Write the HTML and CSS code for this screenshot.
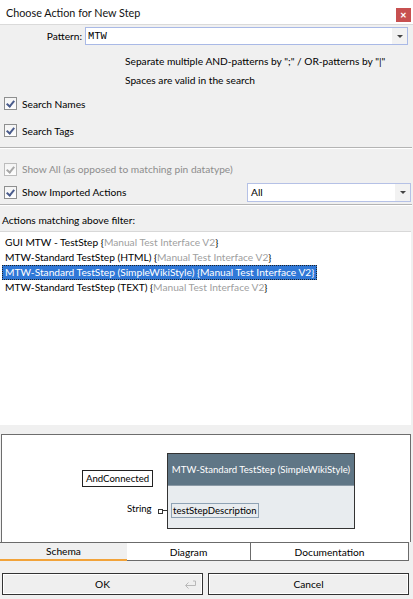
FILE: index.html
```html
<!DOCTYPE html>
<html lang="en">
<head>
    <meta charset="UTF-8" />
    <title>Choose Action for New Step</title>
    <link rel="stylesheet" href="styles.css">
</head>
<body>
<div class="dialog">

    <div class="titlebar">
        <span class="title">Choose Action for New Step</span>
        <span class="close">&#x2715;</span>
    </div>

    <div class="pattern-row">
        <label class="pattern-label">Pattern:</label>
        <div class="combo combo-focus">
            <span class="combo-text mono">MTW</span>
            <span class="combo-arrow"></span>
        </div>
    </div>

    <div class="hints">
        <div class="hint">Separate multiple AND-patterns by ";" / OR-patterns by "|"</div>
        <div class="hint">Spaces are valid in the search</div>
    </div>

    <div class="check-row">
        <span class="box checked"></span>Search Names
    </div>
    <div class="check-row">
        <span class="box checked"></span>Search Tags
    </div>

    <div class="separator sep-top"></div>

    <div class="check-row disabled">
        <span class="box checked"></span>Show All (as opposed to matching pin datatype)
    </div>
    <div class="check-row imported">
        <span class="check-label"><span class="box checked"></span>Show Imported Actions</span>
        <div class="combo combo-small">
            <span class="combo-text">All</span>
            <span class="combo-arrow"></span>
        </div>
    </div>

    <div class="separator sep-bottom"></div>

    <div class="list-label">Actions matching above filter:</div>

    <div class="list">
        <div class="item">GUI MTW - TestStep {<span class="pkg">Manual Test Interface V2</span>}</div>
        <div class="item">MTW-Standard TestStep (HTML) {<span class="pkg">Manual Test Interface V2</span>}</div>
        <div class="item selected">MTW-Standard TestStep (SimpleWikiStyle) {Manual Test Interface V2}</div>
        <div class="item">MTW-Standard TestStep (TEXT) {<span class="pkg">Manual Test Interface V2</span>}</div>
    </div>

    <div class="schema">
        <div class="pin-box and-connected">AndConnected</div>
        <div class="node">
            <div class="node-head">MTW-Standard TestStep (SimpleWikiStyle)</div>
            <div class="node-body">
                <span class="param">testStepDescription</span>
            </div>
        </div>
        <span class="pin-type">String</span>
        <span class="pin-dot"></span>
        <span class="pin-line"></span>
    </div>

    <div class="tabs">
        <div class="tab active">Schema</div>
        <div class="tab">Diagram</div>
        <div class="tab">Documentation</div>
    </div>

    <div class="buttons">
        <button class="btn">OK
            <svg class="enter" width="14" height="9" viewBox="0 0 14 9">
                <path d="M12.5 1 V5.5 H3 M5.5 2.5 L2.5 5.5 L5.5 8.5" fill="none" stroke="#b8b8b8" stroke-width="1"/>
                <path d="M10 1 H12.5" fill="none" stroke="#b8b8b8" stroke-width="1"/>
            </svg>
        </button>
        <button class="btn">Cancel</button>
    </div>
</div>
</body>
</html>
```

FILE: styles.css
```css
body {
    margin: 0;
    background: #f0f0f0;
    font-family: 'Lato', 'Open Sans', sans-serif;
    font-size: 10.2px;
    color: #000;
}

.dialog {
    width: 413px;
    height: 599px;
    display: flex;
    flex-direction: column;
    overflow: hidden;
}

/* window caption */
.titlebar {
    height: 24px;
    background: #fff;
    border-bottom: 1px solid #dadada;
    display: flex;
    align-items: center;
    justify-content: space-between;
    padding: 0 2px 0 6px;
    flex-shrink: 0;
}

.title {
    font-size: 10.8px;
    color: #111;
}

.close {
    width: 15px;
    height: 14px;
    background: #c75050;
    color: #fff;
    font-size: 8px;
    font-weight: bold;
    display: flex;
    align-items: center;
    justify-content: center;
    margin-top: 6px;
}

.pattern-row {
    display: flex;
    align-items: center;
    margin-top: 2px;
    height: 18px;
}

.pattern-label {
    width: 82px;
    text-align: right;
    padding-right: 3px;
}

.combo {
    position: relative;
    height: 16px;
    background: #fff;
    border: 1px solid #abadb3;
    display: flex;
    align-items: center;
    box-sizing: content-box;
}

.combo-focus {
    width: 321px;
    border-color: #a9b9e6;
}

.combo-text {
    padding-left: 2px;
    flex: 1;
}

.mono {
    font-family: 'Liberation Mono', monospace;
    font-size: 10.5px;
}

.combo-arrow {
    width: 15px;
    height: 100%;
    background: #f2f2f2;
    position: relative;
}

.combo-arrow::after {
    content: "";
    position: absolute;
    left: 5px;
    top: 7px;
    border-left: 3px solid transparent;
    border-right: 3px solid transparent;
    border-top: 3px solid #444;
}

.hints {
    margin-top: 7px;
    padding-left: 125px;
}

.hint {
    height: 19px;
    line-height: 19px;
}

.check-row {
    display: flex;
    align-items: center;
    height: 27px;
    padding-left: 4px;
}

.check-label {
    display: flex;
    align-items: center;
    flex: 1;
}

.box {
    width: 11px;
    height: 11px;
    border: 1px solid #8e8f8f;
    background: linear-gradient(#f4f4f4, #fdfdfd);
    margin-right: 5px;
    position: relative;
    flex-shrink: 0;
}

.box.checked::after {
    content: "";
    position: absolute;
    left: 3px;
    top: 1px;
    width: 3px;
    height: 6px;
    border-right: 2px solid #4a5c8c;
    border-bottom: 2px solid #4a5c8c;
    transform: rotate(40deg);
}

.disabled {
    color: #8d8d8d;
    height: 24px;
}

.disabled .box {
    border-color: #bcbcbc;
}

.disabled .box.checked::after {
    border-color: #a8a8a8;
}

.imported {
    height: 22px;
    padding-right: 2px;
}

.combo-small {
    width: 162px;
    height: 17px;
    border-color: #b5c1e6;
}

.combo-small .combo-text {
    padding-left: 3px;
}

.separator {
    height: 1px;
    margin-right: 1px;
    background: #b4b4b4;
    border-bottom: 1px solid #fff;
}

.sep-top {
    margin-top: 3px;
    margin-bottom: 8px;
}

.sep-bottom {
    margin-top: 1px;
}

.list-label {
    height: 16px;
    line-height: 16px;
    padding-left: 2px;
    margin-top: 6px;
}

.list {
    height: 194px;
    margin: 3px 2px 0 0;
    background: #fff;
    border-top: 1px solid #d8d8d8;
    padding: 3px 0 0 2px;
    box-sizing: border-box;
}

.item {
    height: 15px;
    line-height: 13px;
    padding-left: 2px;
    white-space: nowrap;
    width: fit-content;
    border: 1px dotted transparent;
    box-sizing: border-box;
}

.pkg {
    color: #a0a0a0;
}

.item.selected {
    background: #3078d7;
    color: #fff;
    border: 1px dotted #222;
    padding-right: 2px;
}

/* schema preview */
.schema {
    position: relative;
    height: 107px;
    margin: 9px 2px 0 1px;
    background: #fff;
    border: 1px solid #6d6d6d;
    border-bottom: none;
    flex-shrink: 0;
    font-size: 9.6px;
}

.pin-box {
    position: absolute;
    border: 1px solid #222;
    padding: 0 3px;
    height: 15px;
    line-height: 15px;
    background: #fff;
}

.and-connected {
    left: 80px;
    top: 35px;
}

.node {
    position: absolute;
    left: 165px;
    top: 18px;
    width: 186px;
    height: 74px;
    border: 1px solid #333;
    background: #e8ecef;
}

.node-head {
    height: 31px;
    background: #5f7686;
    border-bottom: 1px solid #8b9aa6;
    color: #fff;
    display: flex;
    align-items: center;
    justify-content: center;
    white-space: nowrap;
}

.node-body {
    padding: 17px 0 0 3px;
}

.param {
    border: 1px solid #8ea2b4;
    padding: 0 1px;
    line-height: 13px;
    display: inline-block;
}

.pin-type {
    position: absolute;
    left: 125px;
    top: 68px;
}

.pin-dot {
    position: absolute;
    left: 156px;
    top: 74px;
    width: 3px;
    height: 3px;
    border: 1px solid #333;
}

.pin-line {
    position: absolute;
    left: 161px;
    top: 75px;
    width: 5px;
    height: 1px;
    background: #333;
}

.tabs {
    display: flex;
    height: 19px;
    margin-right: 4px;
    flex-shrink: 0;
}

.tab {
    display: flex;
    align-items: center;
    justify-content: center;
    border: 1px solid #6b6b6b;
    background: #fff;
    box-sizing: border-box;
}

.tab:nth-child(1) { width: 127px; }
.tab:nth-child(2) { width: 124px; border-left: none; }
.tab:nth-child(3) { flex: 1; border-left: none; }

.tab.active {
    background: #f0f0f0;
    border: none;
    border-bottom: 2px solid #f2a33a;
    border-top: 1px solid #6b6b6b;
}

.buttons {
    display: flex;
    gap: 5px;
    padding: 12px 4px 0 2px;
}

.btn {
    flex: 1;
    height: 22px;
    border: 1px solid #333;
    box-shadow: inset 0 0 0 1px #fff;
    background: #efefef;
    font-family: inherit;
    font-size: 10.2px;
    position: relative;
    padding: 0;
}

.enter {
    position: absolute;
    right: 5px;
    top: 6px;
}
```
